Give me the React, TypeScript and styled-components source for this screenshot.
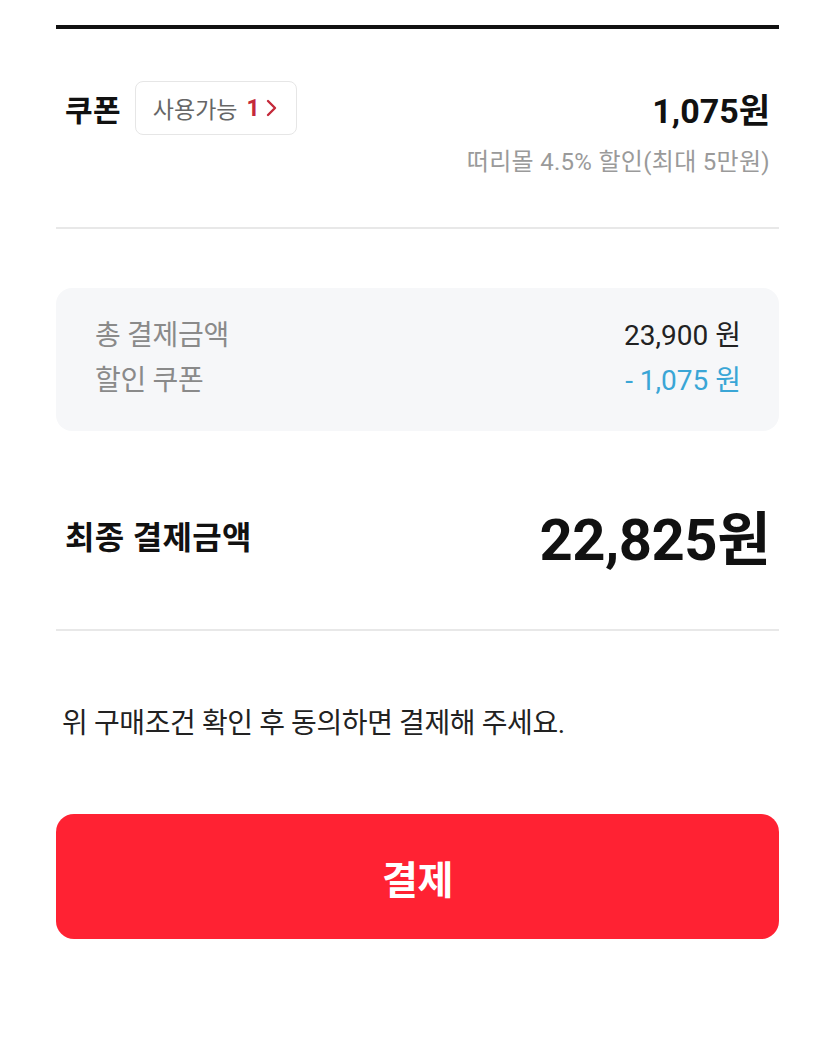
import React from 'react';
import styled, { createGlobalStyle } from 'styled-components';

const GlobalStyle = createGlobalStyle`
  html, body {
    margin: 0;
    padding: 0;
    background: #ffffff;
  }
  body {
    font-family: Roboto, 'Noto Sans CJK KR', sans-serif;
    color: #111;
  }
`;

const Page = styled.div`
  width: 835px;
  min-height: 1053px;
  box-sizing: border-box;
  padding: 25px 56px 0 56px;
  background: #fff;
`;

const TopRule = styled.div`
  height: 4px;
  background: #111;
`;

const CouponSection = styled.section`
  display: flex;
  flex-direction: column;
  padding: 52px 9px 0 9px;
  height: 200px;
  box-sizing: border-box;
  border-bottom: 2px solid #e8e8e8;
`;

const CouponRow = styled.div`
  display: flex;
  align-items: center;
  justify-content: space-between;
`;

const CouponLeft = styled.div`
  display: flex;
  align-items: center;
  gap: 14px;
`;

const BoldLabel = styled.span<{ $size?: number }>`
  font-size: ${(p) => p.$size ?? 30}px;
  font-weight: 700;
  color: #111;
  letter-spacing: 0.3px;
`;

const Badge = styled.button`
  display: inline-flex;
  align-items: center;
  height: 54px;
  padding: 0 19px 0 17px;
  border: 1.5px solid #e6e6e6;
  border-radius: 8px;
  background: #fff;
  font-family: inherit;
  font-size: 23px;
  color: #666;
  gap: 9px;
`;

const BadgeCount = styled.span`
  color: #c4293a;
  font-weight: 700;
  display: inline-flex;
  align-items: center;
  gap: 6px;
`;

const Amount = styled.span<{ $size: number; $spacing?: number }>`
  font-size: ${(p) => p.$size}px;
  font-weight: 700;
  color: #111;
  letter-spacing: ${(p) => p.$spacing ?? 0}px;
`;

const Note = styled.div`
  align-self: flex-end;
  margin-top: 7px;
  font-size: 24px;
  color: #9a9a9a;
  letter-spacing: 0.3px;
`;

const SummaryBox = styled.div`
  margin-top: 59px;
  background: #f6f7f9;
  border-radius: 16px;
  padding: 30px 38px 32px 39px;
  display: flex;
  flex-direction: column;
  gap: 9px;
`;

const SummaryRow = styled.div`
  display: flex;
  justify-content: space-between;
  align-items: center;
  font-size: 28px;
  line-height: 36px;
`;

const SummaryLabel = styled.span`
  color: #8a8a8a;
  letter-spacing: -0.3px;
`;

const SummaryValue = styled.span<{ $tone?: 'blue' }>`
  color: ${(p) => (p.$tone === 'blue' ? '#3aa6d6' : '#222')};
  letter-spacing: 0;
`;

const FinalSection = styled.section`
  display: flex;
  align-items: center;
  justify-content: space-between;
  padding: 10px 9px 0 9px;
  height: 200px;
  box-sizing: border-box;
  border-bottom: 2px solid #e8e8e8;
`;

const Notice = styled.p`
  margin: 70px 0 0 6px;
  font-size: 28px;
  color: #222;
  letter-spacing: -0.4px;
`;

const PayButton = styled.button`
  display: flex;
  width: 100%;
  height: 125px;
  margin-top: 73px;
  align-items: center;
  justify-content: center;
  border: none;
  border-radius: 18px;
  background: #ff2233;
  color: #fff;
  font-family: inherit;
  font-size: 39px;
  font-weight: 700;
  letter-spacing: -0.5px;
`;

const Chevron = () => (
  <svg width="11" height="18" viewBox="0 0 11 18" fill="none">
    <path d="M2 2 L9 9 L2 16" stroke="#c4293a" strokeWidth="2.4" strokeLinecap="round" strokeLinejoin="round" />
  </svg>
);

export default function App() {
  return (
    <Page>
      <GlobalStyle />
      <TopRule />
      <CouponSection>
        <CouponRow>
          <CouponLeft>
            <BoldLabel>쿠폰</BoldLabel>
            <Badge>
              사용가능
              <BadgeCount>
                1
                <Chevron />
              </BadgeCount>
            </Badge>
          </CouponLeft>
          <Amount $size={34}>1,075원</Amount>
        </CouponRow>
        <Note>떠리몰 4.5% 할인(최대 5만원)</Note>
      </CouponSection>

      <SummaryBox>
        <SummaryRow>
          <SummaryLabel>총 결제금액</SummaryLabel>
          <SummaryValue>23,900 원</SummaryValue>
        </SummaryRow>
        <SummaryRow>
          <SummaryLabel>할인 쿠폰</SummaryLabel>
          <SummaryValue $tone="blue">- 1,075 원</SummaryValue>
        </SummaryRow>
      </SummaryBox>

      <FinalSection>
        <BoldLabel $size={32}>최종 결제금액</BoldLabel>
        <Amount $size={58} $spacing={-0.5}>22,825원</Amount>
      </FinalSection>

      <Notice>위 구매조건 확인 후 동의하면 결제해 주세요.</Notice>

      <PayButton>결제</PayButton>
    </Page>
  );
}
